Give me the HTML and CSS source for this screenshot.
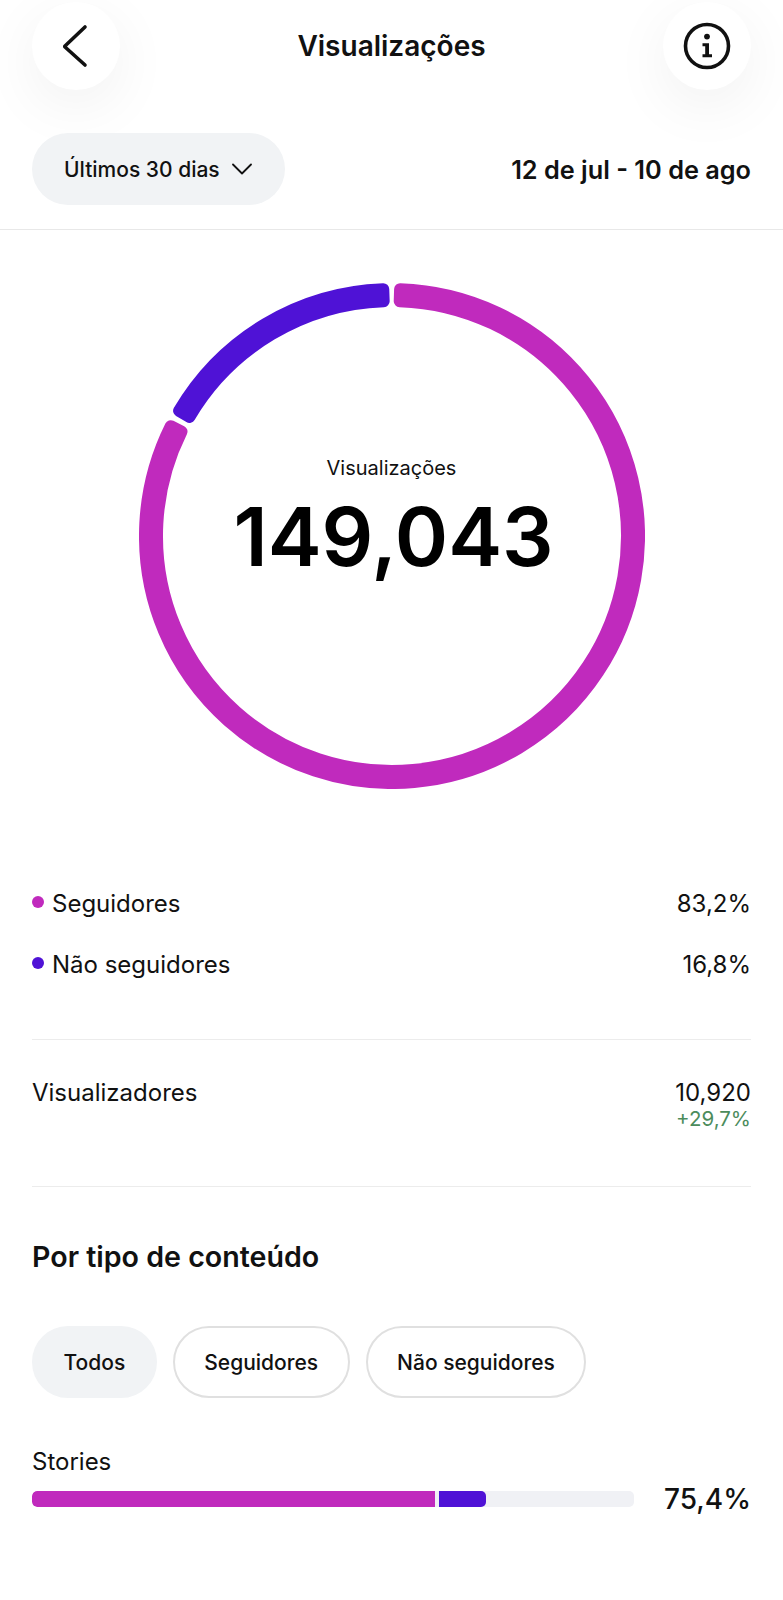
FILE: index.html
```html
<!DOCTYPE html>
<html lang="pt-BR">
<head>
<meta charset="utf-8">
<title>Visualizações</title>
<link rel="stylesheet" href="styles.css">
</head>
<body>
<main class="page">
  <header class="topbar">
    <button class="round-btn" aria-label="Voltar">
      <svg class="icon-back" viewBox="0 0 28 44" width="28" height="44"><path d="M24 3 L4 22 Q3.5 22.5 4 23 L24 41" fill="none" stroke="#111" stroke-width="3.6" stroke-linecap="round" stroke-linejoin="round"/></svg>
    </button>
    <h1 class="title">Visualizações</h1>
    <button class="round-btn" aria-label="Informações">
      <svg viewBox="0 0 48 48" width="48" height="48"><circle cx="24" cy="24" r="21.5" fill="none" stroke="#111" stroke-width="3.6"/><circle cx="24" cy="14.6" r="2.9" fill="#111"/><path d="M19.5 21.2 H26 V32.2 H29 V35.2 H19.5 V32.2 H22.2 V24.2 H19.5 Z" fill="#111"/></svg>
    </button>
  </header>

  <section class="range">
    <div class="pill">Últimos 30 dias
      <svg viewBox="0 0 20 12" width="20" height="12"><path d="M1 1.5 L10 10.5 L19 1.5" fill="none" stroke="#111" stroke-width="1.8" stroke-linecap="round" stroke-linejoin="round"/></svg>
    </div>
    <div class="dates">12 de jul - 10 de ago</div>
  </section>

  <section class="chart">
    <div class="donut">
      <svg viewBox="0 0 506 506" width="506" height="506">
        <path d="M261.1 6.13 A247 247 0 1 1 31.76 143.17 L42.51 148.51 A235 235 0 1 0 260.71 18.13 Z" fill="#c02abd" stroke="#c02abd" stroke-width="12" stroke-linejoin="round"/>
        <path d="M244.25 6.16 A247 247 0 0 0 40.08 127.81 L50.42 133.89 A235 235 0 0 1 244.68 18.15 Z" fill="#4f12d6" stroke="#4f12d6" stroke-width="12" stroke-linejoin="round"/>
      </svg>
      <div class="donut-label">
        <div class="donut-caption">Visualizações</div>
        <div class="donut-value">149,043</div>
      </div>
    </div>
  </section>

  <section class="legend">
    <div class="row"><span class="key"><i class="dot dot-m"></i>Seguidores</span><span>83,2%</span></div>
    <div class="row"><span class="key"><i class="dot dot-b"></i>Não seguidores</span><span>16,8%</span></div>
  </section>

  <section class="viewers">
    <span>Visualizadores</span>
    <div class="viewers-num">
      <div>10,920</div>
      <div class="delta">+29,7%</div>
    </div>
  </section>

  <section class="types">
    <h2 class="types-title">Por tipo de conteúdo</h2>
    <div class="chips">
      <div class="chip chip-on">Todos</div>
      <div class="chip">Seguidores</div>
      <div class="chip">Não seguidores</div>
    </div>
    <div class="stat-name">Stories</div>
    <div class="stat">
      <div class="bar">
        <div class="seg seg-m"></div>
        <div class="seg seg-b"></div>
      </div>
      <div class="stat-value">75,4%</div>
    </div>
  </section>
</main>
</body>
</html>
```
FILE: styles.css
```css
* { box-sizing: border-box; }
html, body { margin: 0; padding: 0; background: #fff; }
body { font-family: Inter, "Liberation Sans", sans-serif; color: #111; }
.page { width: 783px; height: 1600px; overflow: hidden; }

.topbar {
  display: flex; align-items: center; justify-content: space-between;
  padding: 2px 32px 0;
}
.round-btn {
  width: 88px; height: 88px; border: 0; border-radius: 50%; background: #fff; padding: 0;
  display: flex; align-items: center; justify-content: center;
  box-shadow: 0 16px 60px rgba(0, 0, 0, .06);
}
.icon-back { margin-right: 2px; }
.title { margin: 0; font-size: 28px; line-height: 32px; font-weight: 600; letter-spacing: 0; }

.range {
  display: flex; align-items: center; justify-content: space-between;
  margin-top: 43px; padding: 0 32px 24px; border-bottom: 1px solid #e8e8e8;
}
.pill {
  display: flex; align-items: center; gap: 12px; height: 72px; padding: 0 33px 0 32px;
  border-radius: 36px; background: #f1f3f5; font-size: 21px; font-weight: 500;
}
.dates { font-size: 25.3px; font-weight: 600; letter-spacing: 0; }

.chart { display: flex; justify-content: center; padding-top: 53px; }
.donut { position: relative; width: 506px; height: 506px; }
.donut svg { display: block; }
.donut-label {
  position: absolute; inset: 0; display: flex; flex-direction: column; align-items: center; justify-content: center;
}
.donut-caption { font-size: 20px; line-height: 24px; margin-top: -33px; }
.donut-value { font-size: 81px; line-height: 92px; font-weight: 600; color: #000; margin: 11px 0 0 4px; }

.legend { padding: 0 32px; margin-top: 84px; font-size: 24px; line-height: 30px; }
.row { display: flex; justify-content: space-between; align-items: center; height: 61px; }
.key { display: flex; align-items: center; gap: 8px; }
.dot { width: 12px; height: 12px; border-radius: 50%; margin-top: -3px; }
.dot-m { background: #c02abd; }
.dot-b { background: #4f12d6; }

.viewers {
  display: flex; justify-content: space-between; align-items: flex-start;
  margin: 44px 32px 0; padding: 38px 0 55px;
  border-top: 1px solid #ececec; border-bottom: 1px solid #ececec;
  font-size: 24px; line-height: 30px;
}
.viewers-num { text-align: right; }
.delta { color: #4c8c5c; font-size: 20.5px; line-height: 24px; margin-top: -1px; }

.types { padding: 0 32px; }
.types-title { margin: 52px 0 0; font-size: 28.6px; line-height: 36px; font-weight: 600; }
.chips { display: flex; gap: 16px; margin-top: 51px; }
.chip {
  display: flex; align-items: center; height: 72px; padding: 0 29.5px;
  border: 2px solid #e0e0e0; border-radius: 36px; background: #fff;
  font-size: 21px; font-weight: 500;
}
.chip-on { background: #f1f3f5; border-color: #f1f3f5; }
.stat-name { margin-top: 49px; font-size: 24px; line-height: 30px; }
.stat { display: flex; align-items: center; justify-content: space-between; margin-top: 5px; }
.bar {
  display: flex; gap: 4px; width: 602px; height: 16px; border-radius: 5px; background: #f0f1f5; overflow: hidden;
}
.seg { height: 100%; }
.seg-m { width: 403px; background: #c02abd; border-radius: 5px 0 0 5px; }
.seg-b { width: 47px; background: #4f12d6; border-radius: 0 5px 5px 0; }
.stat-value { font-size: 28px; line-height: 34px; font-weight: 550; }
```
